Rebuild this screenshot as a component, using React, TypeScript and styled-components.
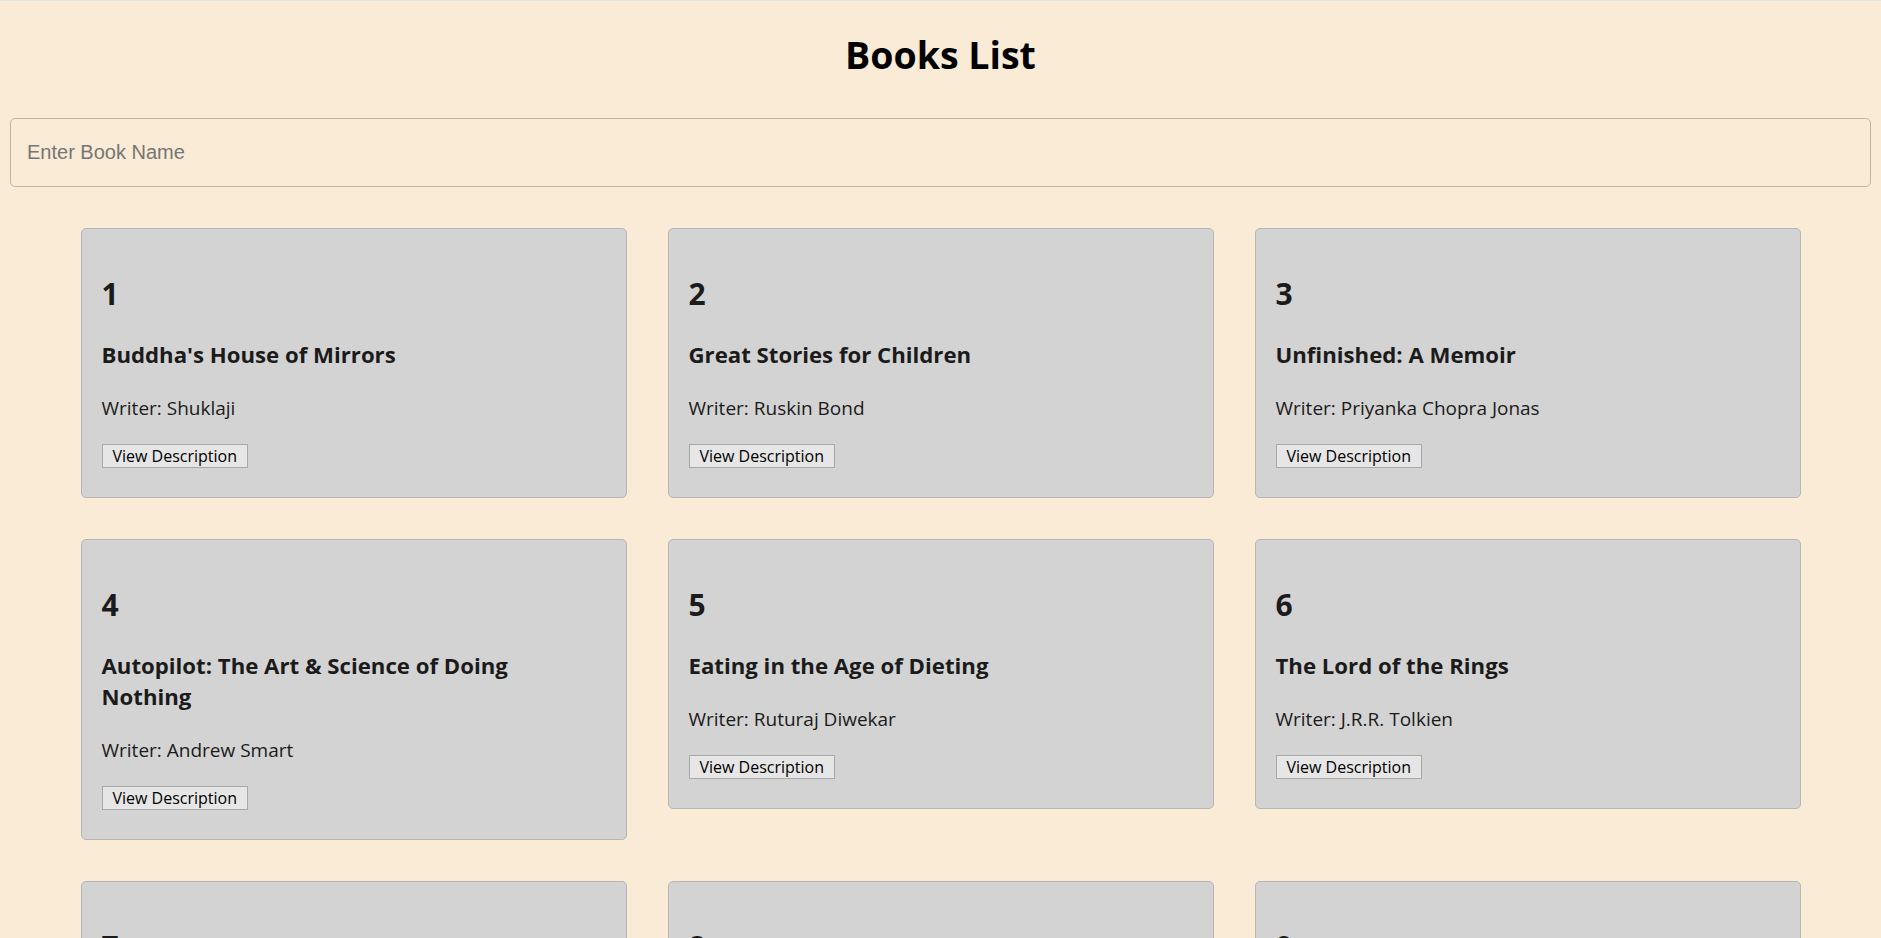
import React from "react";
import styled, { createGlobalStyle } from "styled-components";

const GlobalStyle = createGlobalStyle`
  html {
    border-top: 1px solid #e4e4e4;
    background: #faebd7;
  }
  body {
    margin: 0;
    background: #faebd7;
    font-family: "Open Sans", "Noto Sans", sans-serif;
  }
  * { box-sizing: border-box; }
`;

const Page = styled.div`
  padding: 0 10px 40px;
`;

const Title = styled.h1`
  margin: 0;
  padding-top: 27px;
  font-family: "Open Sans", sans-serif;
  font-size: 37.5px;
  line-height: 54px;
  font-weight: 700;
  color: #000;
  text-align: center;
`;

const Search = styled.input`
  display: block;
  width: 100%;
  height: 69px;
  margin-top: 36px;
  padding: 0 16px;
  border: 1px solid #c6b4a2;
  border-radius: 5px;
  background: transparent;
  font-family: "Liberation Sans", Arial, sans-serif;
  font-size: 20px;
  color: #000;
  outline: none;
  &::placeholder {
    color: #757575;
  }
`;

const Grid = styled.div`
  display: grid;
  grid-template-columns: repeat(3, 546px);
  justify-content: center;
  align-items: start;
  gap: 41px;
  margin-top: 41px;
`;

const Card = styled.div`
  display: flex;
  flex-direction: column;
  align-items: flex-start;
  padding: 44.5px 20px 29.5px;
  background: #d3d3d3;
  border: 1px solid #b6b6b6;
  border-radius: 5px;
  color: #1b1b1b;
`;

const Number = styled.h2`
  margin: 0;
  font-size: 30px;
  line-height: 40px;
  font-weight: 700;
`;

const BookTitle = styled.h3`
  margin: 25.5px 0 0;
  max-width: 470px;
  font-size: 22.2px;
  line-height: 31px;
  font-weight: 700;
`;

const Writer = styled.p`
  margin: 24.5px 0 0;
  font-size: 19px;
  line-height: 27px;
`;

const Button = styled.button`
  margin-top: 22px;
  height: 24px;
  padding: 0 10px;
  border: 1px solid #a9a9a9;
  border-radius: 0;
  background: #e6e6e6;
  font-family: "Open Sans", sans-serif;
  font-size: 16px;
  line-height: 22px;
  color: #000;
  cursor: pointer;
`;

const books = [
  { id: 1, title: "Buddha's House of Mirrors", writer: "Shuklaji" },
  { id: 2, title: "Great Stories for Children", writer: "Ruskin Bond" },
  { id: 3, title: "Unfinished: A Memoir", writer: "Priyanka Chopra Jonas" },
  { id: 4, title: "Autopilot: The Art & Science of Doing Nothing", writer: "Andrew Smart" },
  { id: 5, title: "Eating in the Age of Dieting", writer: "Ruturaj Diwekar" },
  { id: 6, title: "The Lord of the Rings", writer: "J.R.R. Tolkien" },
  { id: 7, title: "The Alchemist", writer: "Paulo Coelho" },
  { id: 8, title: "Wings of Fire", writer: "A.P.J. Abdul Kalam" },
  { id: 9, title: "The Guide", writer: "R.K. Narayan" },
];

export default function App() {
  return (
    <>
      <GlobalStyle />
      <Page>
        <Title>Books List</Title>
        <Search type="text" placeholder="Enter Book Name" />
        <Grid>
          {books.map((b) => (
            <Card key={b.id}>
              <Number>{b.id}</Number>
              <BookTitle>{b.title}</BookTitle>
              <Writer>Writer: {b.writer}</Writer>
              <Button>View Description</Button>
            </Card>
          ))}
        </Grid>
      </Page>
    </>
  );
}
